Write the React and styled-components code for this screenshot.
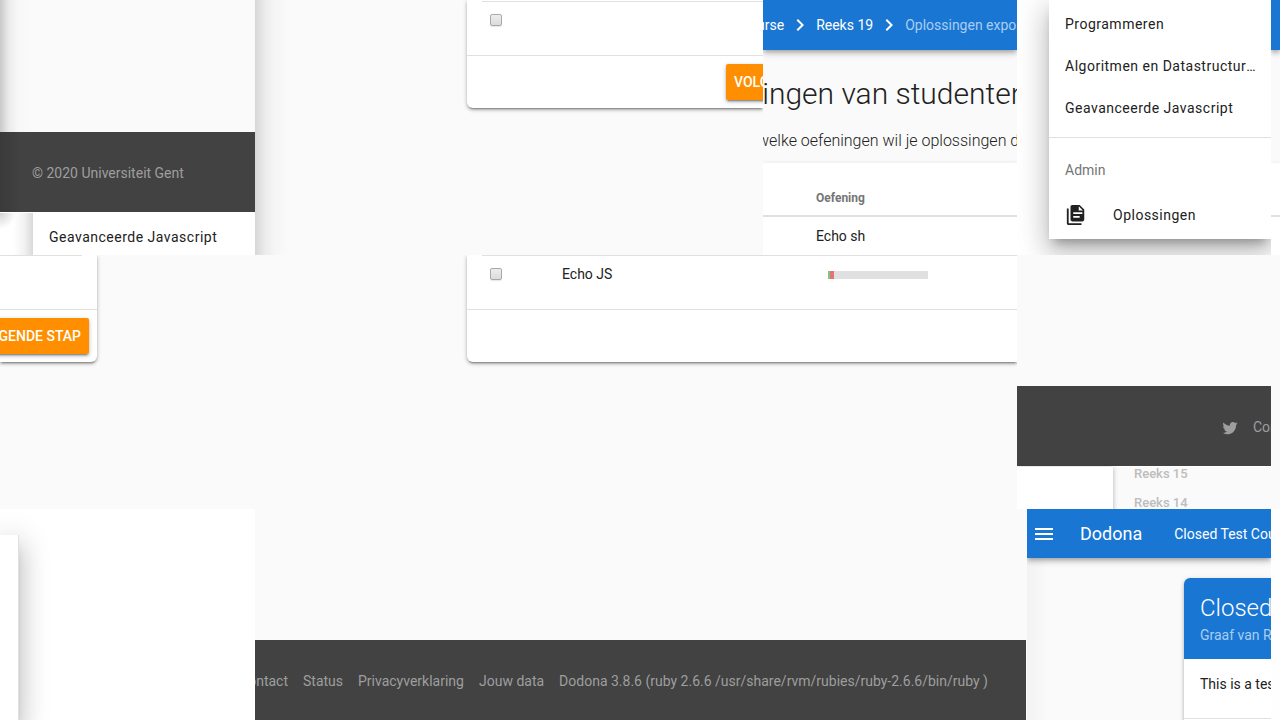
import React from "react";
import styled, { createGlobalStyle } from "styled-components";

const Global = createGlobalStyle`
  * { box-sizing: border-box; }
  body {
    margin: 0;
    background: #fafafa;
    color: #212121;
    font: 400 14px/20px Roboto, sans-serif;
  }
  a { color: inherit; text-decoration: none; }
`;

const raised = "0 2px 2px rgba(0,0,0,.14), 0 3px 1px -2px rgba(0,0,0,.2), 0 1px 5px rgba(0,0,0,.12), 0 2px 4px rgba(0,0,0,.14)";
const barShadow = "0 4px 5px rgba(0,0,0,.14), 0 1px 10px rgba(0,0,0,.12), 0 2px 4px -1px rgba(0,0,0,.2)";
const drawerShadow = "0 16px 24px 2px rgba(0,0,0,.14), 0 6px 30px 5px rgba(0,0,0,.12), 0 8px 10px -5px rgba(0,0,0,.3)";

const Page = styled.main`
  display: grid;
  grid-template-rows: minmax(0, 255fr) minmax(0, 254fr) minmax(0, 211fr);
  height: 100vh;
  overflow: hidden;
`;
const Band = styled.section`
  display: grid;
  grid-template-columns: ${(p) => p.$cols};
  grid-template-rows: minmax(0, 1fr);
  min-width: 0;
  min-height: 0;
`;
const Tile = styled.div`
  display: flex;
  flex-direction: column;
  min-width: 0;
  overflow: hidden;
  background: ${(p) => p.$bg || "#fafafa"};
`;
const FadeTile = styled(Tile)`
  background: linear-gradient(to right, rgba(0,0,0,.14), rgba(0,0,0,.06) 10px, rgba(0,0,0,.02) 20px, transparent 34px), #fafafa;
`;
const CopyrightTile = styled(Tile)`
  background: linear-gradient(to right, rgba(0,0,0,.2), rgba(0,0,0,.06) 9px, rgba(0,0,0,.01) 18px, transparent 30px), #fafafa;
`;

const Footer = styled.footer`
  display: flex;
  flex: none;
  align-items: center;
  gap: 15px;
  height: 80px;
  padding: 4px 32px 2px;
  margin-top: ${(p) => p.$top || 0}px;
  background: #424242;
  color: #9e9e9e;
  white-space: nowrap;
`;
const CopyrightFooter = styled(Footer)`
  background: linear-gradient(to right, rgba(0,0,0,.12), rgba(0,0,0,.03) 17px, transparent 18px), #424242;
`;
const SocialFooter = styled(Footer)`
  padding: 4px 0 2px 205px;
  svg { flex: none; width: 16px; height: 16px; }
`;
const LinksFooter = styled(Footer)`
  justify-content: flex-end;
  margin-right: 1px;
  padding-right: 38px;
`;

const MenuEdge = styled.div`
  flex: 1;
  padding-left: 33px;
  border-top: 1px solid #fff;
  background: linear-gradient(to left, rgba(0,0,0,.15), rgba(0,0,0,.05) 9px, transparent 20px) 0 0 / 33px 100% no-repeat,
    radial-gradient(circle at 0 0, rgba(0,0,0,.17), transparent 16px), #fff;
`;
const Menu = styled.nav`
  display: flex;
  flex-direction: column;
  background: #fff;
`;
const MenuItem = styled.a`
  display: block;
  height: 42px;
  padding: 14px 12px 8px 16px;
  letter-spacing: .5px;
  white-space: nowrap;
  overflow: hidden;
  text-overflow: ellipsis;
`;

const Card = styled.section`
  display: flex;
  flex-direction: column;
  flex: none;
  margin: ${(p) => p.$top || 0}px ${(p) => p.$right || 0}px 0 ${(p) => p.$left || 0}px;
  background: #fff;
  border-radius: ${(p) => p.$radius};
  box-shadow: ${raised};
`;
const CardActions = styled.div`
  display: flex;
  justify-content: flex-end;
  height: 53px;
  padding: 8px ${(p) => (p.$cut ? 0 : 8)}px 8px 0;
  border-top: 1px solid #e0e0e0;
`;
const NextButton = styled.button`
  flex: none;
  height: 36px;
  padding: 0 8px;
  border: 0;
  border-radius: 2px;
  background: #ff8f00;
  color: #fff;
  font: 500 14px/36px Roboto, sans-serif;
  white-space: nowrap;
  box-shadow: ${raised};
`;
const CutRight = styled.div`
  display: flex;
  flex: none;
  width: 37px;
`;

const ExerciseTable = styled.table`
  width: calc(100% - 15px);
  margin-left: 15px;
  margin-top: ${(p) => p.$top || 0}px;
  border-collapse: separate;
  border-spacing: 0;
  table-layout: fixed;
  td {
    height: 54px;
    padding: 8px 8px 0;
    border-top: 1px solid #e0e0e0;
    vertical-align: top;
  }
`;
const RowEnd = styled.div`
  height: 54px;
  margin-right: 15px;
  border-top: 1px solid #e0e0e0;
`;
const Check = styled.input`
  appearance: none;
  display: block;
  width: 12px;
  height: 12px;
  margin: 4px 0 0;
  border: 1px solid #a9a9a9;
  border-radius: 2px;
  background: linear-gradient(#ededed, #dcdcdc);
  box-shadow: 0 1px 1px rgba(0,0,0,.1);
`;
const Progress = styled.div`
  display: flex;
  width: 100px;
  height: 8px;
  margin-top: 7px;
  background: #e0e0e0;
`;
const Segment = styled.span`
  width: ${(p) => p.$w}px;
  background: ${(p) => p.$color};
`;

const Navbar = styled.nav`
  display: flex;
  flex: none;
  align-items: center;
  height: ${(p) => p.$h}px;
  background: #1976d2;
  color: #fff;
  white-space: nowrap;
  box-shadow: ${barShadow};
  svg { flex: none; }
`;
const Crumbs = styled(Navbar)`
  gap: 4px;
  a:first-child { margin-left: -6px; }
`;
const Current = styled.span`
  color: #a9cdf2;
`;
const Title = styled.h1`
  margin: 24px 0 0 -16px;
  font-size: 30px;
  font-weight: 300;
  line-height: 40px;
  white-space: nowrap;
`;
const Lead = styled.p`
  margin: 15px 0 0 -6px;
  font-size: 16px;
  font-weight: 300;
  line-height: 24px;
  white-space: nowrap;
`;
const Results = styled.table`
  width: 100%;
  margin-top: 10px;
  background: #fff;
  border-collapse: separate;
  border-spacing: 0;
  box-shadow: 0 1px 5px rgba(0,0,0,.12);
  th, td { text-align: left; padding: 0 0 0 53px; }
  th {
    height: 54px;
    padding-top: 18px;
    border-bottom: 2px solid #e0e0e0;
    color: #757575;
    font-size: 12px;
    font-weight: 700;
  }
  td { height: 38px; vertical-align: middle; }
`;

const DrawerTile = styled(Tile)`
  padding-left: 32px;
`;
const Drawer = styled(Menu)`
  flex: none;
  height: 239px;
  box-shadow: ${drawerShadow};
`;
const MenuGroup = styled.div`
  margin-top: 11px;
  padding: 22px 16px 0;
  border-top: 1px solid #e0e0e0;
  color: #757575;
`;
const IconItem = styled.a`
  display: flex;
  align-items: center;
  gap: 26px;
  height: 48px;
  margin-top: 11px;
  padding-left: 16px;
  letter-spacing: .5px;
`;

const SeriesRow = styled.div`
  display: flex;
  flex: 1;
  border-top: 1px solid #fff;
`;
const WhitePane = styled.div`
  width: 96px;
  background: #fff;
  box-shadow: 0 1px 5px rgba(0,0,0,.3);
`;
const SeriesList = styled.nav`
  display: flex;
  flex-direction: column;
  gap: 9px;
  margin: -3px 0 0 21px;
  color: #bdbdbd;
  font-size: 13px;
  font-weight: 500;
`;

const SidePanel = styled.aside`
  flex: 1;
  margin: 26px 236px 0 0;
  background: #fff;
  border-right: 1px solid #e0e0e0;
  box-shadow: ${drawerShadow};
`;

const CourseTile = styled(Tile)`
  background: linear-gradient(to right, rgba(0,0,0,.03), transparent 20px), #fafafa;
`;
const Brand = styled.a`
  margin-left: 24px;
  font-size: 18px;
`;
const NavCourse = styled.a`
  margin-left: 32px;
`;
const MenuButton = styled.button`
  display: flex;
  margin-left: 5px;
  padding: 0;
  border: 0;
  background: none;
  color: #fff;
`;
const CourseHead = styled.header`
  height: 81px;
  padding: 14px 0 0 16px;
  border-radius: 6px 0 0 0;
  background: #1976d2;
  color: #fff;
  white-space: nowrap;
  h2 { margin: 0; font-size: 24px; font-weight: 300; line-height: 32px; }
  p { margin: 1px 0 0; color: #a9cdf2; }
`;
const CourseText = styled.p`
  height: 60px;
  margin: 0 0 20px;
  padding: 15px 0 0 16px;
  border-bottom: 1px solid #e0e0e0;
  white-space: nowrap;
`;

const StripNav = styled.div`
  flex: none;
  height: 50px;
  background: #1976d2;
  box-shadow: ${barShadow};
`;
const StripHead = styled.div`
  flex: none;
  height: 54px;
  margin-top: 113px;
  border-bottom: 2px solid #e0e0e0;
  background: #fff;
  box-shadow: 0 1px 5px rgba(0,0,0,.12);
`;
const StripBody = styled.div`
  flex: 1;
  background: #fff;
`;

const Chevron = () => (
  <svg width="24" height="24" viewBox="0 0 24 24" fill="currentColor" aria-hidden="true">
    <path d="M8.59 16.58 13.17 12 8.59 7.41 10 6l6 6-6 6-1.41-1.42z" />
  </svg>
);
const Files = () => (
  <svg width="22" height="22" viewBox="0 0 24 24" fill="currentColor" aria-hidden="true">
    <path d="M16 15H9v-2h7m3-2H9V9h10M16 1H8C6.900 1 6 1.900 6 3v14c0 1.110.89 2 2 2h11c1.110 0 2-.89 2-2V6l-5-5m-1 6V2.500L19.500 7M4 5v16h14v2H4c-1.110 0-2-.9-2-2V5h2z" fillRule="evenodd" />
  </svg>
);
const Bird = () => (
  <svg viewBox="1 1 22 20" fill="currentColor" aria-label="Twitter">
    <path d="M22.460 6c-.77.35-1.600.58-2.460.69.88-.53 1.560-1.370 1.880-2.380-.83.5-1.750.85-2.720 1.050C18.370 4.500 17.260 4 16 4c-2.350 0-4.270 1.920-4.270 4.290 0 .34.04.67.11.98C8.280 9.090 5.110 7.380 3 4.790c-.37.63-.58 1.370-.58 2.150 0 1.490.75 2.810 1.910 3.560-.71 0-1.370-.2-1.950-.5v.03c0 2.080 1.480 3.820 3.440 4.210a4.220 4.220 0 0 1-1.930.07 4.280 4.280 0 0 0 4 2.980 8.521 8.521 0 0 1-5.330 1.840c-.34 0-.68-.02-1.020-.06C3.440 20.290 5.700 21 8.120 21 16 21 20.330 14.460 20.330 8.790c0-.19 0-.37-.01-.56.84-.6 1.560-1.360 2.140-2.230z" />
  </svg>
);

export default function App() {
  return (
    <>
      <Global />
      <Page>
        <Band $cols="255fr 508fr 254fr 254fr 9fr">
          <CopyrightTile>
            <CopyrightFooter $top={132}>© 2020 Universiteit Gent</CopyrightFooter>
            <MenuEdge>
              <Menu>
                <MenuItem href="#js">Geavanceerde Javascript</MenuItem>
              </Menu>
            </MenuEdge>
          </CopyrightTile>
          <FadeTile>
            <Card $left={212} $radius="0 0 0 6px">
              <ExerciseTable $top={1}>
                <tbody>
                  <tr><td><Check type="checkbox" aria-label="Oefening" /></td></tr>
                </tbody>
              </ExerciseTable>
              <CardActions $cut>
                <CutRight>
                  <NextButton>VOLGENDE STAP</NextButton>
                </CutRight>
              </CardActions>
            </Card>
          </FadeTile>
          <Tile>
            <Crumbs $h={50}>
              <a href="#course">urse</a>
              <Chevron />
              <a href="#reeks">Reeks 19</a>
              <Chevron />
              <Current>Oplossingen exporteren</Current>
            </Crumbs>
            <Title>singen van studenten</Title>
            <Lead>welke oefeningen wil je oplossingen downloaden?</Lead>
            <Results>
              <thead><tr><th>Oefening</th></tr></thead>
              <tbody><tr><td>Echo sh</td></tr></tbody>
            </Results>
          </Tile>
          <DrawerTile $bg="#fff">
            <Drawer>
              <MenuItem href="#prog">Programmeren</MenuItem>
              <MenuItem href="#algo">Algoritmen en Datastructuren</MenuItem>
              <MenuItem href="#js">Geavanceerde Javascript</MenuItem>
              <MenuGroup>Admin</MenuGroup>
              <IconItem href="#sol"><Files />Oplossingen</IconItem>
            </Drawer>
          </DrawerTile>
          <Tile>
            <StripNav />
            <StripHead />
            <StripBody />
          </Tile>
        </Band>

        <Band $cols="255fr 762fr 254fr 9fr">
          <Tile>
            <Card $right={158} $radius="0 0 6px 0">
              <RowEnd />
              <CardActions>
                <NextButton>VOLGENDE STAP</NextButton>
              </CardActions>
            </Card>
          </Tile>
          <Tile>
            <Card $left={212} $radius="0 0 0 6px">
              <ExerciseTable>
                <colgroup><col width="72" /><col width="266" /><col /></colgroup>
                <tbody>
                  <tr>
                    <td><Check type="checkbox" aria-label="Echo JS" /></td>
                    <td>Echo JS</td>
                    <td>
                      <Progress>
                        <Segment $w={2} $color="#81c784" />
                        <Segment $w={4} $color="#e57373" />
                      </Progress>
                    </td>
                  </tr>
                </tbody>
              </ExerciseTable>
              <CardActions />
            </Card>
          </Tile>
          <Tile>
            <SocialFooter $top={131}><Bird /><a href="#contact">Contact</a></SocialFooter>
            <SeriesRow>
              <WhitePane />
              <SeriesList>
                <a href="#15">Reeks 15</a>
                <a href="#14">Reeks 14</a>
              </SeriesList>
            </SeriesRow>
          </Tile>
          <Tile />
        </Band>

        <Band $cols="255fr 772fr 244fr 9fr">
          <Tile $bg="#fff"><SidePanel /></Tile>
          <Tile>
            <LinksFooter $top={131}>
              <a href="#contact">Contact</a>
              <a href="#status">Status</a>
              <a href="#privacy">Privacyverklaring</a>
              <a href="#data">Jouw data</a>
              <a href="#version">Dodona 3.8.6 (ruby 2.6.6 /usr/share/rvm/rubies/ruby-2.6.6/bin/ruby )</a>
            </LinksFooter>
          </Tile>
          <CourseTile>
            <Navbar $h={49}>
              <MenuButton aria-label="Menu">
                <svg width="24" height="24" viewBox="0 0 24 24" fill="currentColor"><path d="M3 6h18v2H3zM3 11h18v2H3zM3 16h18v2H3z" /></svg>
              </MenuButton>
              <Brand href="#home">Dodona</Brand>
              <NavCourse href="#course">Closed Test Course</NavCourse>
            </Navbar>
            <Card $top={20} $left={157} $radius="6px 0 0 0">
              <CourseHead>
                <h2>Closed Test Course</h2>
                <p>Graaf van Rommelgem</p>
              </CourseHead>
              <CourseText>This is a test course</CourseText>
            </Card>
          </CourseTile>
          <Tile $bg="#fefefe" />
        </Band>
      </Page>
    </>
  );
}
